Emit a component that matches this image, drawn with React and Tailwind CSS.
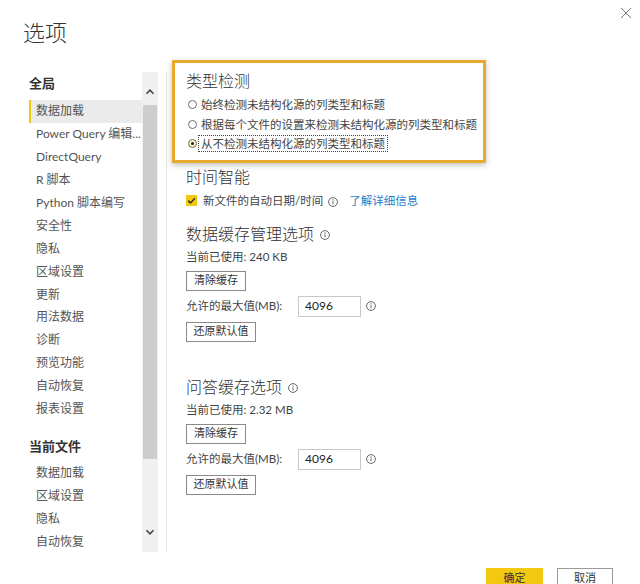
import React from "react";

const globalItems = [
  "数据加载",
  "Power Query 编辑...",
  "DirectQuery",
  "R 脚本",
  "Python 脚本编写",
  "安全性",
  "隐私",
  "区域设置",
  "更新",
  "用法数据",
  "诊断",
  "预览功能",
  "自动恢复",
  "报表设置",
];

const fileItems = ["数据加载", "区域设置", "隐私", "自动恢复"];

/** 小的 i 图标 */
function Info({ className = "" }) {
  return (
    <svg viewBox="0 0 10 10" className={`h-[10px] w-[10px] shrink-0 ${className}`}>
      <circle cx="5" cy="5" r="4.4" fill="none" stroke="#555" strokeWidth="0.9" />
      <line x1="5" y1="4.3" x2="5" y2="7.3" stroke="#555" strokeWidth="0.9" />
      <circle cx="5" cy="2.9" r="0.55" fill="#555" />
    </svg>
  );
}

function Chevron({ up }) {
  return (
    <svg viewBox="0 0 10 7" className="h-[7px] w-[10px]">
      <path
        d={up ? "M1.5 5.8 L5 2.2 L8.5 5.8" : "M1.5 1.2 L5 4.8 L8.5 1.2"}
        fill="none"
        stroke="#444"
        strokeWidth="1.6"
      />
    </svg>
  );
}

function Radio({ checked, label }) {
  return (
    <div className="flex h-[19.5px] items-center">
      <span
        className={`flex h-[9px] w-[9px] shrink-0 items-center justify-center rounded-full border border-[#6e6e6e] ${
          checked ? "bg-[#fbefbd]" : "bg-white"
        }`}
      >
        {checked && <span className="h-[3px] w-[3px] rounded-full bg-[#222]" />}
      </span>
      <span
        className={`ml-[2px] px-[2px] leading-[15px] ${
          checked ? "outline-1 outline-dotted outline-[#444]" : ""
        }`}
      >
        {label}
      </span>
    </div>
  );
}

function Btn({ children, w }) {
  return (
    <button
      className={`flex h-[20px] items-center justify-center border border-[#8a8a8a] bg-white text-[11px] text-[#333] ${w}`}
    >
      {children}
    </button>
  );
}

function CacheBlock({ title, used, top }) {
  return (
    <div className={`ml-[14px] flex flex-col items-start ${top}`}>
      <div className="flex h-[22px] items-center text-[16px] font-light text-[#333]">
        {title}
        <Info className="ml-[6px] mt-[2px]" />
      </div>
      <div className="mt-[3px] flex h-[18px] items-center text-[11.5px] text-[#444]">{used}</div>
      <div className="mt-[5px]">
        <Btn w="w-[60px]">清除缓存</Btn>
      </div>
      <div className="mt-[5px] flex h-[21px] items-center text-[11.5px] text-[#444]">
        <span className="w-[112px]">允许的最大值(MB):</span>
        <div className="flex h-[21px] w-[63px] items-center border border-[#c8c8c8] pl-[6px] text-[12px] text-[#222]">
          4096
        </div>
        <Info className="ml-[5px]" />
      </div>
      <div className="mt-[5px]">
        <Btn w="w-[70px]">还原默认值</Btn>
      </div>
    </div>
  );
}

export default function App() {
  return (
    <div className="flex h-[584px] w-[640px] flex-col overflow-hidden bg-white font-['Lato','Noto_Sans_CJK_SC',sans-serif] text-[#333]">
      {/* 标题 */}
      <div className="flex h-[60px] shrink-0 items-start justify-between">
        <div className="ml-[23px] mt-[18px] text-[22px] font-light leading-[30px] text-[#333]">选项</div>
        <svg viewBox="0 0 12 12" className="mr-[8px] mt-[7px] h-[12px] w-[12px]">
          <path d="M1 1 L11 11 M11 1 L1 11" stroke="#777" strokeWidth="1" />
        </svg>
      </div>

      <div className="flex h-[500px] shrink-0">
        {/* 左侧导航 */}
        <div className="ml-[29px] mt-[12px] flex h-[480px]">
          <div className="h-[480px] w-[113px] overflow-hidden text-[12px] text-[#555]">
            <div className="flex h-[24px] items-center text-[13px] font-bold text-[#333]">全局</div>
            <div className="mt-[4px]">
              {globalItems.map((t, i) => (
                <div
                  key={t}
                  className={`flex h-[22.9px] items-center whitespace-nowrap ${
                    i === 0 ? "border-l-2 border-[#f2c811] bg-[#ebebeb] pl-[5px]" : "pl-[7px]"
                  }`}
                >
                  {t}
                </div>
              ))}
            </div>
            <div className="mt-[14px] flex h-[24px] items-center text-[13px] font-bold text-[#333]">当前文件</div>
            <div className="mt-[3.5px]">
              {fileItems.map((t) => (
                <div key={t} className="flex h-[22.9px] items-center pl-[7px]">
                  {t}
                </div>
              ))}
            </div>
          </div>
          {/* 滚动条 */}
          <div className="flex h-[480px] w-[16px] flex-col bg-[#f0f0f0]">
            <div className="flex h-[33px] shrink-0 justify-center pt-[16px]">
              <Chevron up />
            </div>
            <div className="mx-[1px] h-[354px] shrink-0 bg-[#cdcdcd]" />
            <div className="flex-1" />
            <div className="flex h-[31px] shrink-0 justify-center pt-[8px]">
              <Chevron />
            </div>
          </div>
        </div>

        <div className="ml-[8px] mt-[12px] h-[480px] w-px bg-[#e3e3e3]" />

        {/* 右侧内容 */}
        <div className="ml-[5px] flex flex-col">
          <div className="w-[314px] border-[3px] border-[#e9a92c] bg-white pb-[6px] pl-[11px] pt-[7px] text-[11.5px] text-[#444] shadow-[0_2px_6px_rgba(0,0,0,0.25)]">
            <div className="flex h-[22px] items-center text-[16px] font-light text-[#333]">类型检测</div>
            <div className="mt-[3px] pl-[2px]">
              <Radio label="始终检测未结构化源的列类型和标题" />
              <Radio label="根据每个文件的设置来检测未结构化源的列类型和标题" />
              <Radio checked label="从不检测未结构化源的列类型和标题" />
            </div>
          </div>

          <div className="ml-[14px] mt-[3px] flex h-[22px] items-center text-[16px] font-light text-[#333]">时间智能</div>
          <div className="ml-[14px] mt-[3px] flex h-[20px] items-center text-[11.5px] text-[#444]">
            <span className="flex h-[11px] w-[11px] shrink-0 items-center justify-center bg-[#f2c811]">
              <svg viewBox="0 0 11 11" className="h-[11px] w-[11px]">
                <path d="M2.2 5.6 L4.5 7.9 L8.9 3.2" fill="none" stroke="#333" strokeWidth="1.5" />
              </svg>
            </span>
            <span className="ml-[6px]">新文件的自动日期/时间</span>
            <Info className="ml-[5px] mt-[3px]" />
            <span className="ml-[11px] text-[#2a7bc8]">了解详细信息</span>
          </div>

          <CacheBlock title="数据缓存管理选项" used="当前已使用: 240 KB" top="mt-[12px]" />
          <CacheBlock title="问答缓存选项" used="当前已使用: 2.32 MB" top="mt-[34px]" />
        </div>
      </div>

      {/* 底部按钮 */}
      <div className="flex shrink-0 justify-end gap-[14px] pr-[27px] pt-[8px]">
        <button className="flex h-[21px] w-[57px] items-center justify-center bg-[#f2c811] text-[11px] text-[#333]">
          确定
        </button>
        <button className="flex h-[21px] w-[56px] items-center justify-center border border-[#9a9a9a] bg-white text-[11px] text-[#333]">
          取消
        </button>
      </div>
    </div>
  );
}
